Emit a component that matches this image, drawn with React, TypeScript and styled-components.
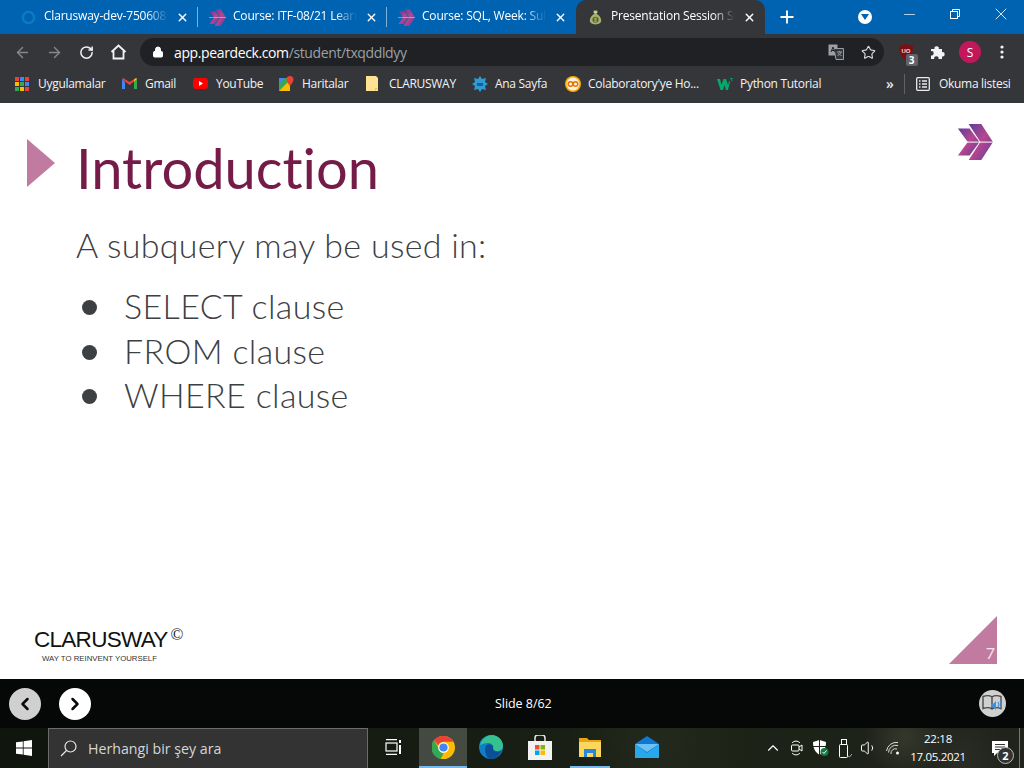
import React from 'react';
import styled, { createGlobalStyle } from 'styled-components';
import { ArrowLeft, ArrowRight, RotateCw, Lock, Star, Plus, X, Minus, ChevronUp, Volume1, ChevronLeft, ChevronRight } from 'lucide-react';

const UI_FONT = `"Open Sans", "Noto Sans", sans-serif`;

const GlobalStyle = createGlobalStyle`
    html, body {
        margin: 0;
        padding: 0;
        background: #fff;
    }
    body {
        font-family: ${UI_FONT};
        overflow: hidden;
    }
`;

const Screen = styled.div`
    width: 1024px;
    height: 768px;
    display: flex;
    flex-direction: column;
    overflow: hidden;
`;

/* ---------- tabs ---------- */
const TabStrip = styled.div`
    height: 34px;
    background: #0063b1;
    display: flex;
    align-items: stretch;
    padding-left: 9px;
    flex-shrink: 0;
`;

const Tab = styled.div<{ $active?: boolean; $last?: boolean }>`
    width: 189px;
    display: flex;
    align-items: center;
    padding-left: 11px;
    padding-right: 8px;
    box-sizing: border-box;
    border-right: 1px solid ${(p) => (p.$last || p.$active ? 'transparent' : '#7fb0d8')};
    background: ${(p) => (p.$active ? '#35363a' : 'transparent')};
    border-radius: ${(p) => (p.$active ? '10px 10px 0 0' : '0')};
    height: ${(p) => (p.$active ? '34px' : '20px')};
    margin-top: ${(p) => (p.$active ? '0' : '7px')};
    gap: 7px;
`;

const TabIcon = styled.span`
    width: 17px;
    height: 17px;
    flex-shrink: 0;
    display: flex;
    align-items: center;
    justify-content: center;
`;

const TabTitle = styled.span`
    flex: 1;
    color: #fff;
    font-size: 12px;
    line-height: 16px;
    letter-spacing: -0.2px;
    white-space: nowrap;
    overflow: hidden;
    margin: 0 1px 2px 0;
    -webkit-mask-image: linear-gradient(to right, #000 82%, transparent 100%);
    mask-image: linear-gradient(to right, #000 82%, transparent 100%);
`;

const StripTail = styled.div`
    flex: 1;
    display: flex;
    align-items: center;
    color: #fff;
`;

const NewTab = styled.span`
    width: 20px;
    margin-left: 12px;
    display: flex;
`;

const ProfileDot = styled.span`
    width: 14px;
    height: 14px;
    border-radius: 50%;
    background: #fff;
    margin-left: 61px;
    display: flex;
    align-items: center;
    justify-content: center;
`;

const WindowButton = styled.span<{ $offset: number }>`
    margin-left: ${(p) => p.$offset}px;
    margin-top: -6px;
    display: flex;
`;

/* ---------- toolbar ---------- */
const Toolbar = styled.div`
    height: 35px;
    background: #35363a;
    display: flex;
    align-items: flex-start;
    padding: 4px 0 0 3px;
    box-sizing: border-box;
    color: #fff;
    flex-shrink: 0;
`;

const NavButton = styled.span<{ $w: number; $dim?: boolean }>`
    width: ${(p) => p.$w}px;
    height: 28px;
    display: flex;
    align-items: center;
    justify-content: center;
    flex-shrink: 0;
    color: ${(p) => (p.$dim ? '#85878a' : '#f1f3f4')};
`;

const Omnibox = styled.div`
    width: 744px;
    height: 28px;
    border-radius: 14px;
    background: #202124;
    display: flex;
    align-items: center;
    padding-left: 12px;
    box-sizing: border-box;
    margin-left: 9px;
    flex-shrink: 0;
`;

const Url = styled.div`
    flex: 1;
    margin-left: 10px;
    font-size: 14px;
    letter-spacing: -0.38px;
    color: #9aa0a6;
`;

const Host = styled.span`
    color: #fff;
`;

const Avatar = styled.span`
    width: 22px;
    height: 22px;
    border-radius: 50%;
    background: #c2185b;
    color: #fff;
    font-size: 12px;
    display: flex;
    align-items: center;
    justify-content: center;
`;

const ExtensionSlot = styled.span`
    position: relative;
    display: flex;
`;

const Badge = styled.span`
    position: absolute;
    right: -5px;
    bottom: -6px;
    width: 12px;
    height: 12px;
    background: #5f6368;
    border-radius: 2px;
    color: #fff;
    font-size: 10px;
    font-weight: 700;
    line-height: 12px;
    text-align: center;
`;

/* ---------- bookmarks ---------- */
const BookmarkBar = styled.div`
    height: 34px;
    background: #35363a;
    display: flex;
    align-items: center;
    padding-left: 15px;
    padding-bottom: 5px;
    box-sizing: border-box;
    flex-shrink: 0;
`;

const Bookmark = styled.div<{ $w: number }>`
    width: ${(p) => p.$w}px;
    display: flex;
    align-items: center;
    flex-shrink: 0;
`;

const BookmarkIcon = styled.span`
    width: 23px;
    flex-shrink: 0;
    display: flex;
`;

const BookmarkLabel = styled.span`
    color: #f1f3f4;
    font-size: 12px;
    letter-spacing: -0.3px;
    white-space: nowrap;
`;

const OverflowMark = styled.span`
    color: #e8eaed;
    font-size: 14px;
    font-weight: 600;
    width: 18px;
    margin-left: 9px;
`;

const BarDivider = styled.span`
    width: 1px;
    height: 20px;
    background: #5f6368;
    margin-right: 11px;
`;

/* ---------- slide ---------- */
const Slide = styled.main`
    flex: 1;
    background: #fff;
    display: flex;
    flex-direction: column;
    position: relative;
    min-height: 0;
`;

const SlideHeader = styled.div`
    display: flex;
    align-items: flex-start;
    padding: 36px 31px 0 27px;
`;

const TitleMark = styled.span`
    width: 0;
    height: 0;
    border-top: 24.5px solid transparent;
    border-bottom: 24.5px solid transparent;
    border-left: 28px solid #c27ba0;
    flex-shrink: 0;
`;

const Title = styled.h1`
    flex: 1;
    margin: -2px 0 0 21px;
    font-family: Lato, sans-serif;
    font-weight: 400;
    font-size: 56px;
    line-height: 62px;
    font-variant-ligatures: none;
    color: #741b47;
`;

const DeckLogo = styled.span`
    margin-top: -15px;
    display: flex;
`;

const SlideBody = styled.div`
    padding: 24px 0 0 76px;
    flex: 1;
    font-family: Lato, sans-serif;
    font-weight: 300;
    color: #3c4043;
`;

const Lead = styled.p`
    margin: 0 0 17px;
    font-size: 34px;
    line-height: 44px;
    letter-spacing: 0.3px;
`;

const Points = styled.ul`
    margin: 0;
    padding: 0 0 0 48px;
    list-style: none;
`;

const Point = styled.li`
    font-size: 34px;
    line-height: 44.5px;
    letter-spacing: 0.35px;
    position: relative;

    &::before {
        content: '';
        position: absolute;
        left: -42px;
        top: 16px;
        width: 15px;
        height: 15px;
        border-radius: 50%;
        background: #3c4043;
    }
`;

const SlideFooter = styled.div`
    display: flex;
    justify-content: space-between;
    align-items: flex-end;
    padding: 0 27px 15px 34px;
`;

const Brand = styled.div`
    color: #111;
    position: relative;
`;

const BrandName = styled.div`
    font-family: "Liberation Sans", Arial, sans-serif;
    font-size: 22.5px;
    line-height: 24px;
    letter-spacing: -0.72px;
    display: flex;
`;

const Copyright = styled.span`
    font-family: "Liberation Serif", serif;
    font-size: 17px;
    line-height: 14px;
    margin-left: 3px;
`;

const BrandTag = styled.div`
    font-family: "Liberation Sans", Arial, sans-serif;
    font-size: 7.8px;
    line-height: 10px;
    margin: 2px 0 0 8px;
    color: #333;
`;

const PageCorner = styled.div`
    width: 48px;
    height: 48px;
    background: #c27ba0;
    clip-path: polygon(100% 0, 100% 100%, 0 100%);
    display: flex;
    align-items: flex-end;
    justify-content: flex-end;
    color: #f3e3ec;
    font-family: Lato, sans-serif;
    font-size: 16px;
    padding: 0 0 2px;
    box-sizing: border-box;
`;

const PageNumber = styled.span`
    margin-right: 2px;
`;

/* ---------- pager ---------- */
const Pager = styled.div`
    height: 49px;
    background: #060808;
    display: flex;
    align-items: center;
    padding: 0 18px 0 9px;
    flex-shrink: 0;
    position: relative;
`;

const PagerButton = styled.span<{ $dim?: boolean }>`
    width: 32px;
    height: 32px;
    border-radius: 50%;
    background: ${(p) => (p.$dim ? '#cfd0cf' : '#fff')};
    color: #0a0a0a;
    display: flex;
    align-items: center;
    justify-content: center;
    margin-right: 18px;
`;

const SlideCount = styled.span`
    position: absolute;
    left: 495px;
    color: #fff;
    font-size: 12.5px;
    letter-spacing: -0.05px;
`;

const ReaderButton = styled.span`
    width: 27px;
    height: 27px;
    border-radius: 50%;
    background: #cfd0cf;
    margin-left: auto;
    display: flex;
    align-items: center;
    justify-content: center;
`;

/* ---------- taskbar ---------- */
const Taskbar = styled.footer`
    height: 40px;
    flex-shrink: 0;
    display: flex;
    align-items: stretch;
    color: #fff;
    background:
        radial-gradient(circle at 905px 10px, #34382c 0, transparent 40px),
        radial-gradient(circle at 960px 30px, #2a2c26 0, transparent 50px),
        radial-gradient(circle at 660px 12px, #23291c 0, transparent 90px),
        linear-gradient(90deg, #10150e, #161c12 40%, #1c2216 70%, #20231c);
`;

const StartButton = styled.span`
    width: 48px;
    display: flex;
    align-items: center;
    justify-content: center;
    flex-shrink: 0;
`;

const SearchBox = styled.div`
    width: 320px;
    box-sizing: border-box;
    background: #333;
    border: 1px solid #6b6b6b;
    border-bottom: none;
    display: flex;
    align-items: center;
    padding-left: 11px;
    gap: 11px;
    color: #d6d6d6;
    font-size: 14.2px;
    flex-shrink: 0;
`;

const TaskSlot = styled.span<{ $w: number; $on?: boolean; $open?: boolean }>`
    width: ${(p) => p.$w}px;
    flex-shrink: 0;
    display: flex;
    align-items: center;
    justify-content: center;
    box-sizing: border-box;
    background: ${(p) => (p.$on ? 'rgba(255,255,255,0.2)' : 'transparent')};
    border-bottom: 2px solid ${(p) => (p.$on || p.$open ? '#76b9ed' : 'transparent')};
    margin-left: ${(p) => (p.$open ? '6px' : '0')};
    margin-right: ${(p) => (p.$open ? '17px' : '0')};
`;

const Tray = styled.div`
    margin-left: auto;
    display: flex;
    align-items: center;
`;

const TrayIcon = styled.span<{ $w: number }>`
    width: ${(p) => p.$w}px;
    display: flex;
    justify-content: center;
    flex-shrink: 0;
    position: relative;
`;

const Clock = styled.div`
    width: 64px;
    margin: 0 11px 0 1px;
    text-align: center;
    font-size: 11.5px;
    line-height: 18.5px;
    letter-spacing: -0.3px;
    white-space: nowrap;
`;

const NoteCount = styled.span`
    position: absolute;
    right: 5px;
    bottom: -8px;
    width: 15px;
    height: 15px;
    border-radius: 50%;
    border: 1px solid #bbb;
    background: #333;
    color: #fff;
    font-size: 11px;
    font-weight: 700;
    line-height: 15px;
    text-align: center;
`;

const ShowDesktop = styled.span`
    width: 1px;
    background: #777;
    margin-right: 4px;
    align-self: stretch;
`;

/* ---------- drawn icons ---------- */
const DeckChevrons = ({ size = 17 }: { size?: number }) => (
    <svg width={size} height={size} viewBox="0 0 40 40">
        <defs>
            <linearGradient id={`cv${size}`} x1="0" y1="0" x2="1" y2="1">
                <stop offset="0" stopColor="#5c3d99" />
                <stop offset="0.5" stopColor="#b8468f" />
                <stop offset="1" stopColor="#5c3d99" />
            </linearGradient>
        </defs>
        <path d="M1 5h13l11 15-11 15H1l11-15z" fill={`url(#cv${size})`} />
        <path d="M13 0h14l13 20-13 20H13l13-20z" fill={`url(#cv${size})`} />
        <path d="M0 19.5h40v1.2H0z" fill="#fff" opacity="0.8" />
    </svg>
);

const RingIcon = () => (
    <svg width="15" height="15" viewBox="0 0 16 16">
        <circle cx="8" cy="8" r="6" fill="none" stroke="#0a7cc4" strokeWidth="2.6" />
    </svg>
);

const PearIcon = () => (
    <svg width="13" height="17" viewBox="0 0 17 20">
        <path d="M6 1h5l-1 4c3 2 6 5 6 9 0 3-3 5-7.500 5S1 17 1 14c0-4 3-7 6-9z" fill="#a9b06a" />
        <circle cx="8.500" cy="13" r="4" fill="#56622e" />
        <path d="M7 11h3M7 13h3M7 15h3" stroke="#d8dc9c" strokeWidth="1" />
        <path d="M6 3h5" stroke="#e6e8d0" strokeWidth="1.500" />
    </svg>
);

const HomeIcon = () => (
    <svg width="17" height="16" viewBox="0 0 17 16" fill="none" stroke="#f1f3f4" strokeWidth="1.800">
        <path d="M1.500 8 8.500 1.500l7 6.500M3.500 7v7.500h10V7" />
    </svg>
);

const TranslateIcon = () => (
    <svg width="16" height="16" viewBox="0 0 16 16">
        <path d="M0.500 0.500h9v11h-9z" fill="#9aa0a6" />
        <path d="M6 4.500h9.500v11H8z" fill="#35363a" stroke="#9aa0a6" />
        <path d="M3 8l2-5 2 5M3.700 6.500h2.600" stroke="#202124" fill="none" />
        <path d="M9 8h5M11.500 7v1M13 8c-.5 2-2 3-3.500 3.500M10 9c.5 1 2 2 3.500 2.500" stroke="#9aa0a6" fill="none" />
    </svg>
);

const ShieldIcon = () => (
    <svg width="14" height="16" viewBox="0 0 14 16">
        <path d="M7 0 14 2c0 7-2 11-7 14C2 13 0 9 0 2z" fill="#7d0f12" />
        <text x="7" y="9" fontSize="6" fontWeight="700" fill="#f6d7d7" textAnchor="middle" fontFamily="Liberation Sans">UO</text>
    </svg>
);

const PuzzleIcon = () => (
    <svg width="16" height="16" viewBox="0 0 16 16" fill="#f1f3f4">
        <path d="M1 5h3.500a2.200 2.200 0 1 1 4.300 0H12v3.200a2.200 2.200 0 1 1 0 4.300V15H8.500a2.200 2.200 0 1 0-4.300 0H1v-3.500a2.200 2.200 0 1 0 0-4.300z" />
    </svg>
);

const MoreDots = () => (
    <svg width="4" height="14" viewBox="0 0 4 14" fill="#f1f3f4">
        <circle cx="2" cy="2" r="1.600" />
        <circle cx="2" cy="7" r="1.600" />
        <circle cx="2" cy="12" r="1.600" />
    </svg>
);

const AppsIcon = () => {
    const colours = ['#ea4335', '#4285f4', '#ea4335', '#fbbc05', '#34a853', '#4285f4', '#34a853', '#fbbc05', '#ea4335'];
    return (
        <svg width="14" height="14" viewBox="0 0 14 14">
            {colours.map((c, i) => (
                <rect key={i} x={(i % 3) * 5} y={Math.floor(i / 3) * 5} width="4" height="4" fill={c} />
            ))}
        </svg>
    );
};

const GmailIcon = () => (
    <svg width="15" height="12" viewBox="0 0 15 12">
        <path d="M0 1v10h3V4z" fill="#4285f4" />
        <path d="M15 1v10h-3V4z" fill="#34a853" />
        <path d="M0 1 7.500 7 15 1l-1-1-6.500 4L1 0z" fill="#ea4335" />
        <path d="M12 4l3-3-1-1-2 1.500z" fill="#fbbc05" />
    </svg>
);

const YoutubeIcon = () => (
    <svg width="15" height="11" viewBox="0 0 15 11">
        <rect width="15" height="11" rx="3" fill="#f00" />
        <path d="M6 3v5l4-2.500z" fill="#fff" />
    </svg>
);

const MapsIcon = () => (
    <svg width="15" height="15" viewBox="0 0 15 15">
        <path d="M0 2h11v13H0z" fill="#34a853" />
        <path d="M0 15 11 4v11z" fill="#fbbc05" />
        <path d="M0 2h6L0 8z" fill="#4285f4" />
        <path d="M11 0a3.500 3.500 0 0 1 3.500 3.500C14.500 6 11 10 11 10S7.500 6 7.500 3.500A3.500 3.500 0 0 1 11 0z" fill="#ea4335" />
    </svg>
);

const FolderNoteIcon = () => (
    <svg width="12" height="15" viewBox="0 0 12 15">
        <path d="M0 0h10l2 2v13H0z" fill="#fde293" />
        <path d="M9 15v-3h3z" fill="#e8c65f" />
    </svg>
);

const HomeSplashIcon = () => (
    <svg width="16" height="16" viewBox="0 0 16 16" fill="#2e9bd6">
        <path d="M8 0l2 3 4-1-1 4 3 2-3 2 1 4-4-1-2 3-2-3-4 1 1-4-3-2 3-2-1-4 4 1z" />
        <path d="M5 7h6v3H5z" fill="#13618e" />
    </svg>
);

const ColabIcon = () => (
    <svg width="16" height="16" viewBox="0 0 16 16">
        <circle cx="8" cy="8" r="8" fill="#f9ab00" />
        <circle cx="8" cy="8" r="6.400" fill="#fdf3dc" />
        <circle cx="5.500" cy="8" r="2.300" fill="none" stroke="#e8710a" strokeWidth="1.500" />
        <circle cx="10.500" cy="8" r="2.300" fill="none" stroke="#e8710a" strokeWidth="1.500" />
    </svg>
);

const W3Icon = () => (
    <svg width="16" height="12" viewBox="0 0 16 12">
        <path d="M0 1h3l1.500 6L6.500 1h2.500l2 6L12 3l1 1-2 8H9L7.500 7 6 12H3.500z" fill="#04aa6d" />
        <path d="M13 .5h2.500L14 2c1 0 1.500.5 1 1.500" stroke="#04aa6d" strokeWidth=".8" fill="none" />
    </svg>
);

const ReadingIcon = () => (
    <svg width="14" height="14" viewBox="0 0 14 14" fill="none" stroke="#e8eaed" strokeWidth="1.300">
        <rect x="0.700" y="0.700" width="12.600" height="12.600" rx="1" />
        <path d="M3 4h1.500M6 4h5M3 7h1.500M6 7h5M3 10h1.500M6 10h5" />
    </svg>
);

const RestoreIcon = () => (
    <svg width="10" height="10" viewBox="0 0 10 10" fill="none" stroke="#fff">
        <rect x="0.500" y="2.500" width="7" height="7" />
        <path d="M2.500 2.500v-2h7v7h-2" />
    </svg>
);

const ReaderIcon = () => (
    <svg width="21" height="19" viewBox="0 0 21 19" fill="none">
        <path d="M10 3C8 1.500 4 1.500 1 2.500v12c3-1 7-1 9 .5 2-1.500 6-1.500 9-.5v-12C16 1.500 12 1.500 10 3zM10 3v12" stroke="#4a4a4a" strokeWidth="1.400" />
        <path d="M9 10h2l3-3v9l-3-3H9z" fill="#3d8fd6" />
        <path d="M16 8c1 1.500 1 3.500 0 5M18 7c1.500 2 1.500 5 0 7" stroke="#3d8fd6" strokeWidth="1.200" />
    </svg>
);

const WindowsIcon = () => (
    <svg width="16" height="16" viewBox="0 0 16 16" fill="#fff">
        <path d="M0 2.300 6.800 1.400V7.600H0zM7.600 1.300 16 0V7.600H7.600zM0 8.400H6.800V14.600L0 13.700zM7.600 8.400H16V16L7.600 14.700z" />
    </svg>
);

const SearchGlass = () => (
    <svg width="17" height="17" viewBox="0 0 17 17" fill="none" stroke="#e6e6e6" strokeWidth="1.200">
        <circle cx="10.500" cy="6.500" r="5.500" />
        <path d="M6.500 10.500 1 16" />
    </svg>
);

const TaskViewIcon = () => (
    <svg width="17" height="16" viewBox="0 0 17 16" fill="none" stroke="#fff" strokeWidth="1.200">
        <path d="M1 .6h11M1 15.400h11" />
        <rect x="1" y="4" width="11" height="8" />
        <rect x="14" y="1" width="2" height="3" fill="#fff" stroke="none" />
        <rect x="14" y="6" width="2" height="9" fill="#fff" stroke="none" />
    </svg>
);

const ChromeIcon = () => (
    <svg width="23" height="23" viewBox="0 0 24 24">
        <circle cx="12" cy="12" r="12" fill="#fbbc05" />
        <path d="M12 0a12 12 0 0 1 10.400 6H12a6 6 0 0 0-5.600 3.800L2 4.200A12 12 0 0 1 12 0z" fill="#ea4335" />
        <path d="M2 4.200 7 13a6 6 0 0 0 5 5l-2.700 5.700A12 12 0 0 1 2 4.200z" fill="#34a853" />
        <circle cx="12" cy="12" r="5.500" fill="#fff" />
        <circle cx="12" cy="12" r="4.300" fill="#4285f4" />
    </svg>
);

const EdgeIcon = () => (
    <svg width="24" height="24" viewBox="0 0 24 24">
        <circle cx="12" cy="12" r="12" fill="#0f7fc9" />
        <path d="M1 10C3 3 9 0 13 0c6 0 11 5 11 11 0 3-2 5-6 5-3 0-4-1-4-3 0-3-2-5-5-5-4 0-7 2-8 2z" fill="#35c18f" />
        <path d="M6 14c0-4 4-6 7-4 2 1 1 3 1 3 0 4 5 5 9 2-2 5-6 9-11 9-4 0-6-5-6-10z" fill="#0b4f96" />
    </svg>
);

const StoreIcon = () => (
    <svg width="24" height="25" viewBox="0 0 24 25">
        <path d="M7 6V3a3 3 0 0 1 3-3h4a3 3 0 0 1 3 3v3" fill="none" stroke="#e6e6e6" strokeWidth="1.500" />
        <path d="M0 6h24v19H0z" fill="#f2f2f2" />
        <rect x="7" y="10" width="4.500" height="4.500" fill="#f25022" />
        <rect x="12.500" y="10" width="4.500" height="4.500" fill="#7fba00" />
        <rect x="7" y="15.500" width="4.500" height="4.500" fill="#00a4ef" />
        <rect x="12.500" y="15.500" width="4.500" height="4.500" fill="#ffb900" />
    </svg>
);

const ExplorerIcon = () => (
    <svg width="22" height="19" viewBox="0 0 22 19">
        <path d="M0 0h8l2 2h12v17H0z" fill="#e8a317" />
        <path d="M0 4h22v15H0z" fill="#fbd75b" />
        <path d="M5 11h12v8h-3v-4H8v4H5z" fill="#2b88d8" />
    </svg>
);

const MailIcon = () => (
    <svg width="24" height="22" viewBox="0 0 24 22">
        <path d="M0 8 12 0l12 8v14H0z" fill="#0f78d4" />
        <path d="M0 8h24L12 16z" fill="#6cc2f5" />
        <path d="M0 8v14h24V8L12 17z" fill="#28a8ea" />
    </svg>
);

const MeetIcon = () => (
    <svg width="12" height="16" viewBox="0 0 12 16" fill="none" stroke="#fff">
        <path d="M1 3c2-2.500 6-2.500 8 0M1 13c2 2.500 6 2.500 8 0" />
        <rect x="0.500" y="5" width="7.500" height="6" rx="1" />
        <path d="M8 7l3-2v6l-3-2" />
    </svg>
);

const DefenderIcon = () => (
    <svg width="16" height="16" viewBox="0 0 16 16">
        <path d="M6.500 0 13 2c0 6-2 10-6.500 13C2 12 0 8 0 2z" fill="#fff" />
        <path d="M6.500 0v15M0 6.500h13" stroke="#222" strokeWidth="1" />
        <circle cx="11.500" cy="12" r="4" fill="#107c41" />
        <path d="M9.500 12l1.500 1.500 2.500-3" stroke="#fff" fill="none" />
    </svg>
);

const UsbIcon = () => (
    <svg width="13" height="19" viewBox="0 0 13 19" fill="none" stroke="#fff">
        <rect x="2.500" y="0.500" width="5" height="5" />
        <rect x="0.500" y="5.500" width="8" height="13" rx="1" />
        <path d="M9 17l1.500 1L13 15" stroke="#aaa" />
    </svg>
);

const WifiIcon = () => (
    <svg width="14" height="14" viewBox="0 0 14 14" fill="none" stroke="#ddd">
        <path d="M.5 10A10 10 0 0 1 12 1.500M2.500 11.500A7.500 7.500 0 0 1 12 4.500M5 13a4.500 4.500 0 0 1 6-5" />
        <circle cx="11.500" cy="12" r="1.500" fill="#fff" stroke="none" />
    </svg>
);

const NotesIcon = () => (
    <svg width="16" height="15" viewBox="0 0 16 15">
        <path d="M0 0h16v12H5l-3 3v-3H0z" fill="#fff" />
        <path d="M3 3.500h10M3 6h10M3 8.500h7" stroke="#333" />
    </svg>
);

const tabs = [
    { title: 'Clarusway-dev-750608', icon: <RingIcon /> },
    { title: 'Course: ITF-08/21 Learn', icon: <DeckChevrons /> },
    { title: 'Course: SQL, Week: Sub', icon: <DeckChevrons /> },
    { title: 'Presentation Session Stu', icon: <PearIcon />, active: true },
];

const bookmarks = [
    { label: 'Uygulamalar', icon: <AppsIcon />, width: 107 },
    { label: 'Gmail', icon: <GmailIcon />, width: 71 },
    { label: 'YouTube', icon: <YoutubeIcon />, width: 86 },
    { label: 'Haritalar', icon: <MapsIcon />, width: 87 },
    { label: 'CLARUSWAY', icon: <FolderNoteIcon />, width: 106 },
    { label: 'Ana Sayfa', icon: <HomeSplashIcon />, width: 93 },
    { label: "Colaboratory'ye Ho...", icon: <ColabIcon />, width: 152 },
    { label: 'Python Tutorial', icon: <W3Icon />, width: 160 },
];

const App = () => (
    <Screen>
        <GlobalStyle />
        <TabStrip>
            {tabs.map((tab, index) => (
                <Tab key={tab.title} $active={tab.active} $last={index === 2}>
                    <TabIcon>{tab.icon}</TabIcon>
                    <TabTitle>{tab.title}</TabTitle>
                    <X size={13} color="#fff" strokeWidth={2.5} />
                </Tab>
            ))}
            <StripTail>
                <NewTab>
                    <Plus size={20} strokeWidth={2.2} />
                </NewTab>
                <ProfileDot>
                    <svg width="8" height="6" viewBox="0 0 8 6">
                        <path d="M0 0h8L4 6z" fill="#0063b1" />
                    </svg>
                </ProfileDot>
                <WindowButton $offset={28.5}>
                    <Minus size={17} strokeWidth={1} />
                </WindowButton>
                <WindowButton $offset={32.5}>
                    <RestoreIcon />
                </WindowButton>
                <WindowButton $offset={31}>
                    <X size={20} strokeWidth={1} />
                </WindowButton>
            </StripTail>
        </TabStrip>
        <Toolbar>
            <NavButton $w={38} $dim>
                <ArrowLeft size={17} strokeWidth={2} />
            </NavButton>
            <NavButton $w={26} $dim>
                <ArrowRight size={17} strokeWidth={2} />
            </NavButton>
            <NavButton $w={38}>
                <RotateCw size={15} strokeWidth={2.4} />
            </NavButton>
            <NavButton $w={26}>
                <HomeIcon />
            </NavButton>
            <Omnibox>
                <Lock size={12} fill="#fff" color="#fff" />
                <Url>
                    <Host>app.peardeck.com</Host>/student/txqddldyy
                </Url>
                <NavButton $w={32} $dim>
                    <TranslateIcon />
                </NavButton>
                <NavButton $w={32}>
                    <Star size={15} strokeWidth={1.8} color="#dadce0" />
                </NavButton>
            </Omnibox>
            <NavButton $w={43}>
                <ExtensionSlot>
                    <ShieldIcon />
                    <Badge>3</Badge>
                </ExtensionSlot>
            </NavButton>
            <NavButton $w={22}>
                <PuzzleIcon />
            </NavButton>
            <NavButton $w={42}>
                <Avatar>S</Avatar>
            </NavButton>
            <NavButton $w={22}>
                <MoreDots />
            </NavButton>
        </Toolbar>
        <BookmarkBar>
            {bookmarks.map((item) => (
                <Bookmark key={item.label} $w={item.width}>
                    <BookmarkIcon>{item.icon}</BookmarkIcon>
                    <BookmarkLabel>{item.label}</BookmarkLabel>
                </Bookmark>
            ))}
            <OverflowMark>»</OverflowMark>
            <BarDivider />
            <BookmarkIcon>
                <ReadingIcon />
            </BookmarkIcon>
            <BookmarkLabel>Okuma listesi</BookmarkLabel>
        </BookmarkBar>
        <Slide>
            <SlideHeader>
                <TitleMark />
                <Title>Introduction</Title>
                <DeckLogo>
                    <DeckChevrons size={36} />
                </DeckLogo>
            </SlideHeader>
            <SlideBody>
                <Lead>A subquery may be used in:</Lead>
                <Points>
                    <Point>SELECT clause</Point>
                    <Point>FROM clause</Point>
                    <Point>WHERE clause</Point>
                </Points>
            </SlideBody>
            <SlideFooter>
                <Brand>
                    <BrandName>
                        CLARUSWAY<Copyright>©</Copyright>
                    </BrandName>
                    <BrandTag>WAY TO REINVENT YOURSELF</BrandTag>
                </Brand>
                <PageCorner>
                    <PageNumber>7</PageNumber>
                </PageCorner>
            </SlideFooter>
        </Slide>
        <Pager>
            <PagerButton $dim>
                <ChevronLeft size={20} strokeWidth={3} />
            </PagerButton>
            <PagerButton>
                <ChevronRight size={20} strokeWidth={3} />
            </PagerButton>
            <SlideCount>Slide 8/62</SlideCount>
            <ReaderButton>
                <ReaderIcon />
            </ReaderButton>
        </Pager>
        <Taskbar>
            <StartButton>
                <WindowsIcon />
            </StartButton>
            <SearchBox>
                <SearchGlass />
                Herhangi bir şey ara
            </SearchBox>
            <TaskSlot $w={51}>
                <TaskViewIcon />
            </TaskSlot>
            <TaskSlot $w={48} $on>
                <ChromeIcon />
            </TaskSlot>
            <TaskSlot $w={48}>
                <EdgeIcon />
            </TaskSlot>
            <TaskSlot $w={49}>
                <StoreIcon />
            </TaskSlot>
            <TaskSlot $w={40} $open>
                <ExplorerIcon />
            </TaskSlot>
            <TaskSlot $w={40}>
                <MailIcon />
            </TaskSlot>
            <Tray>
                <TrayIcon $w={24}>
                    <ChevronUp size={18} strokeWidth={1.5} />
                </TrayIcon>
                <TrayIcon $w={24}>
                    <MeetIcon />
                </TrayIcon>
                <TrayIcon $w={24}>
                    <DefenderIcon />
                </TrayIcon>
                <TrayIcon $w={24}>
                    <UsbIcon />
                </TrayIcon>
                <TrayIcon $w={24}>
                    <Volume1 size={18} strokeWidth={1.3} />
                </TrayIcon>
                <TrayIcon $w={24}>
                    <WifiIcon />
                </TrayIcon>
                <Clock>
                    22:18
                    <br />
                    17.05.2021
                </Clock>
                <TrayIcon $w={38}>
                    <NotesIcon />
                    <NoteCount>2</NoteCount>
                </TrayIcon>
                <ShowDesktop />
            </Tray>
        </Taskbar>
    </Screen>
);

export default App;
